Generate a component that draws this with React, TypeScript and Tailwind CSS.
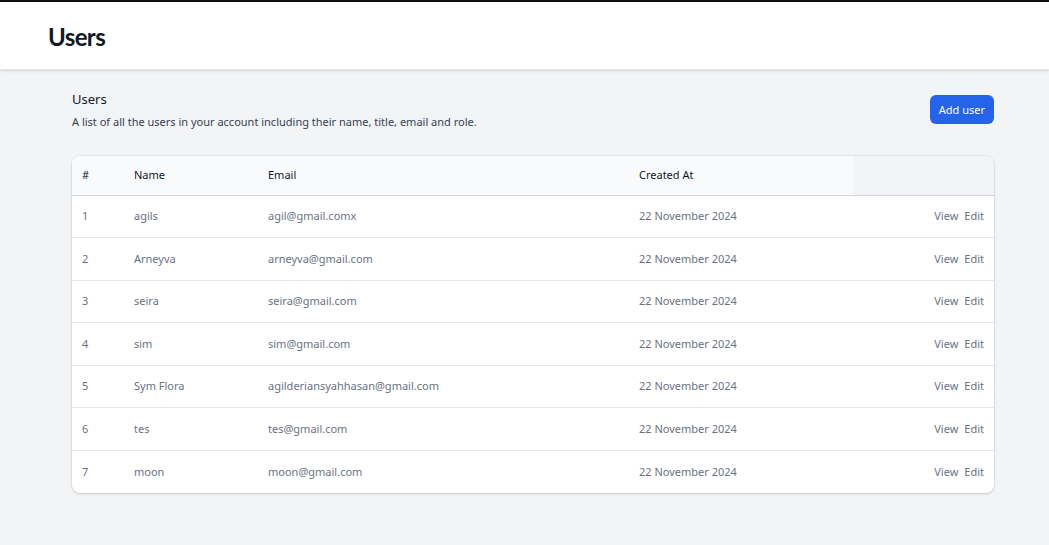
import React from 'react';

interface UserRow {
  id: number;
  name: string;
  email: string;
  createdAt: string;
}

const users: UserRow[] = [
  { id: 1, name: 'agils', email: 'agil@gmail.comx', createdAt: '22 November 2024' },
  { id: 2, name: 'Arneyva', email: 'arneyva@gmail.com', createdAt: '22 November 2024' },
  { id: 3, name: 'seira', email: 'seira@gmail.com', createdAt: '22 November 2024' },
  { id: 4, name: 'sim', email: 'sim@gmail.com', createdAt: '22 November 2024' },
  { id: 5, name: 'Sym Flora', email: 'agilderiansyahhasan@gmail.com', createdAt: '22 November 2024' },
  { id: 6, name: 'tes', email: 'tes@gmail.com', createdAt: '22 November 2024' },
  { id: 7, name: 'moon', email: 'moon@gmail.com', createdAt: '22 November 2024' },
];

const App: React.FC = () => {
  return (
    <div className="min-h-[545px] bg-[#f3f4f6] font-['Noto_Sans',sans-serif] border-t-2 border-[#111111]">
      {/* Page header */}
      <header className="bg-white shadow-sm border-b border-gray-200">
        <div className="h-[67px] flex items-center px-12 pt-[3px]">
          <h1 className="font-['Lato',sans-serif] font-bold text-2xl text-gray-900 tracking-tight">Users</h1>
        </div>
      </header>

      {/* Content */}
      <main className="pl-[72px] pr-[55px] pt-[19px]">
        <div className="flex items-start justify-between">
          <div>
            <h2 className="text-[13px] text-gray-900 leading-5">Users</h2>
            <p className="mt-[5px] text-[11px] text-gray-700 leading-4">
              A list of all the users in your account including their name, title, email and role.
            </p>
          </div>
          <button className="mt-[6px] bg-[#2563eb] text-white text-[11px] rounded-md px-[9px] h-[29px] leading-none">
            Add user
          </button>
        </div>

        {/* Table */}
        <div className="mt-[26px] bg-white rounded-lg shadow-sm ring-1 ring-black/5 overflow-hidden">
          <table className="w-full text-[11px]">
            <thead>
              <tr className="border-b border-gray-300 h-[39px]">
                <th className="bg-gray-50 text-left font-normal text-gray-900 pl-[10px] w-[62px]">#</th>
                <th className="bg-gray-50 text-left font-normal text-gray-900 w-[134px]">Name</th>
                <th className="bg-gray-50 text-left font-normal text-gray-900 w-[371px]">Email</th>
                <th className="bg-gray-50 text-left font-normal text-gray-900 w-[215px]">Created At</th>
                <th className="bg-gray-100"></th>
              </tr>
            </thead>
            <tbody className="divide-y divide-gray-200">
              {users.map((u) => (
                <tr key={u.id} className="h-[42.6px] text-gray-500">
                  <td className="pl-[10px]">{u.id}</td>
                  <td>{u.name}</td>
                  <td>{u.email}</td>
                  <td>{u.createdAt}</td>
                  <td className="text-right pr-[10px]">
                    <span className="inline-flex gap-[6px]">
                      <a href="#" className="hover:text-gray-700">View</a>
                      <a href="#" className="hover:text-gray-700">Edit</a>
                    </span>
                  </td>
                </tr>
              ))}
            </tbody>
          </table>
        </div>
      </main>
    </div>
  );
};

export default App;
